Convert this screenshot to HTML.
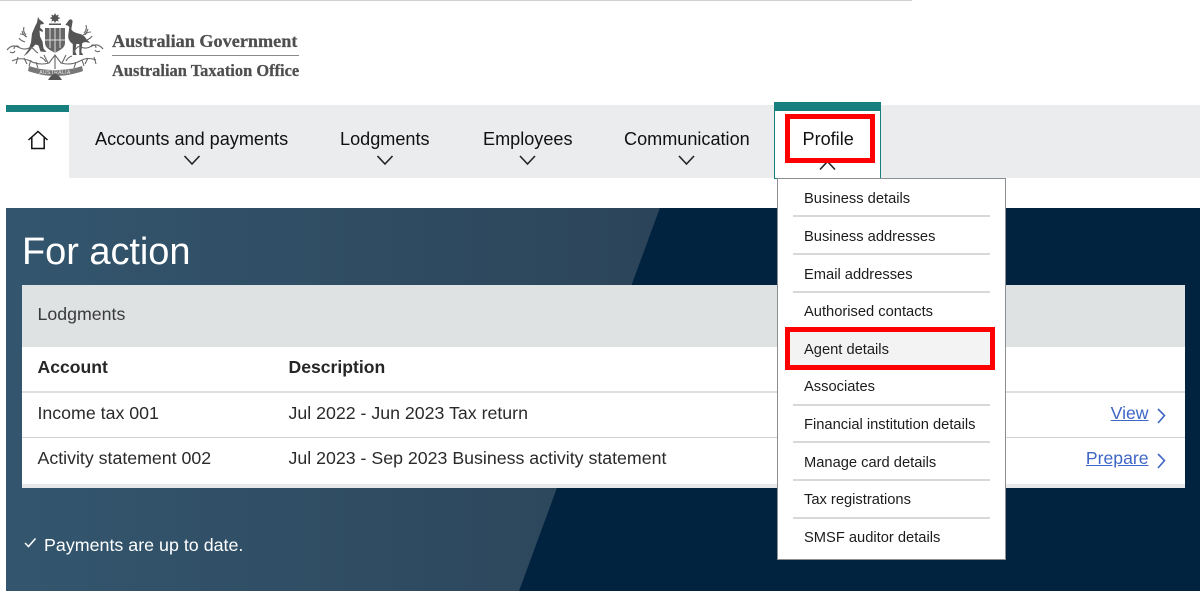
<!DOCTYPE html>
<html><head><meta charset="utf-8"><style>
html,body{margin:0;padding:0;background:#fff}
body{position:relative;width:1200px;height:594px;overflow:hidden;font-family:"Liberation Sans",Arial,sans-serif;color:#1a1a1a}
.a{position:absolute;white-space:nowrap}
.nav{font-size:18.100px;line-height:22px;top:128px;color:#111}
.th{font-size:17.600px;font-weight:bold;line-height:22px;color:#262626}
.td{font-size:17.750px;line-height:22px;color:#2a2a2a}
.m{left:804px;font-size:14.700px;line-height:18px;color:#1c1c1c}
.l{left:793px;width:197px;height:2px;background:#d6d8da}
.lnk{font-size:17.600px;line-height:22px;color:#3e66c4;text-decoration:underline}
</style></head><body>
<div class="a" style="left:0;top:0;width:912px;height:1px;background:#d0d0d0"></div>

<svg class="a" style="left:6px;top:11px;filter:blur(.25px)" width="100" height="72" viewBox="0 0 100 72">
<g fill="#555">
<path d="M49 2l1.200 2.500 2.500-1-.8 2.500 2.500 1-2.500 1.200.8 2.300-2.500-.8L49 12l-1.200-2.300-2.500.8.8-2.300-2.500-1.200 2.500-1-.8-2.500 2.500 1z"/>
<rect x="43" y="12.500" width="12" height="1.500"/>
<path d="M32 6l1.500 2.500L37 11l1 2-3.500.5-.5 3 3 3-.5 1.500-3-1.500.5 6 2.500 5 1 7 3 3.500-6-.5-2-6-3-1-3 3-5 6-4 3 5-7 2.500-7 1-9 3-7 2-4z"/>
<path d="M63 9c2-1.500 4 0 3.500 2l-1.200 7c1 3 5 4 9 5 3 1 5 3 6 5l4 4-5-1-3 1-1 9 2 3-4 0 0-11-3 0-1 8 1.500 3-4 0 0-11c-3-2-5-5-4.500-9l1-8-1.500-1.500-2.500-.5z"/>
</g>
<path d="M39 17h20v15c0 5-5 7-10 10-5-3-10-5-10-10z" fill="#666"/>
<path d="M49 17v25M39 29h20M44 17v20M54 17v20" fill="none" stroke="#ddd" stroke-width="1"/>
<g fill="none" stroke="#666" stroke-width="1.100">
<path d="M1 39c3-4 7-5 11-3s7 3 11 1 5 3 9 5M8 38c0-3 3-4 5-2M4 41c2 1 4 1 5-1"/>
<path d="M97 38c-3-4-7-5-11-3s-7 3-11 1-5 3-8 5M90 37c0-3-3-4-5-2M94 40c-2 1-4 1-5-1"/>
<path d="M6 50c6-3 12-3 18 0 6 3 12 4 19 2l6-8 6 8c7 2 13 1 19-2 5-3 11-3 16-1"/>
<path d="M12 46l-2 7M18 47l3 6M25 49l-2 6M30 51l2 6M38 44l4 8M60 44l-4 8M70 51l-2 6M76 49l2 6M82 47l-3 6M88 46l2 7"/>
<path d="M16 20c1 4 3 5 5 6M14 23c3 0 5 1 6 3M18 16c-1 3 0 6 2 8M19 31c-3-1-5-2-6-4M82 18c-1 4-3 5-5 6M85 21c-3 0-5 1-6 3M80 14c1 3 0 6-2 8M81 29c2-1 4-2 5-4"/>
<path d="M34 46c3 1 5 3 6 5M66 45c-3 1-5 3-6 5M49 44v14"/>
</g>
<path d="M23 55c9 3 17 4 26 4s19-1 27-4l1 5c-8 3-18 5-28 5s-18-2-27-5z" fill="#777"/>
<path d="M44 66l5-4 5 4 2 3H42z" fill="#555"/>
<text x="49" y="63" text-anchor="middle" font-size="5" font-family="Liberation Sans" fill="#eee" letter-spacing=".4">AUSTRALIA</text>
</svg>

<div class="a" style="left:112px;top:30px;font:bold 18.200px/22px 'Liberation Serif',serif;color:#4f4f4f;-webkit-text-stroke:.25px #4f4f4f">Australian Government</div>
<div class="a" style="left:112px;top:55px;width:187px;height:1px;background:#8a8a8a"></div>
<div class="a" style="left:112px;top:60px;font:bold 16.450px/21px 'Liberation Serif',serif;color:#4f4f4f;-webkit-text-stroke:.25px #4f4f4f">Australian Taxation Office</div>

<div class="a" style="left:6px;top:105px;width:1194px;height:73px;background:#eaecee"></div>
<div class="a" style="left:6px;top:105px;width:63px;height:73px;background:#fff"></div>
<div class="a" style="left:6px;top:105px;width:63px;height:7px;background:#17807f"></div>
<svg class="a" style="left:27px;top:130px" width="22" height="20" viewBox="0 0 22 20" fill="none" stroke="#111" stroke-width="1.500"><path d="M1.500 10L11 1.500 20.500 10M4.800 7.500V18.500H17.200V7.500"/></svg>

<div class="a nav" style="left:95px">Accounts and payments</div>
<div class="a nav" style="left:340px">Lodgments</div>
<div class="a nav" style="left:483px">Employees</div>
<div class="a nav" style="left:624px">Communication</div>
<svg class="a" style="left:0;top:150px" width="720" height="20" fill="none" stroke="#222" stroke-width="1.600"><path d="M184.500 6l7.500 8 7.500-8M377.500 6l7.500 8 7.500-8M520 6l7.500 8 7.500-8M679 6l7.500 8 7.500-8"/></svg>

<div class="a" style="left:6px;top:207.500px;width:1194px;height:383.500px;background:#02233f"></div>
<div class="a" style="left:6px;top:207.500px;width:654px;height:383.500px;background:linear-gradient(90deg,#33566e,#2c4459);clip-path:polygon(0 0,654px 0,513px 383.500px,0 383.500px)"></div>
<div class="a" style="left:22px;top:229px;font-size:38px;line-height:46px;color:#fff;letter-spacing:-.05px">For action</div>

<div class="a" style="left:22px;top:285px;width:1163px;height:203px;background:#fff"></div>
<div class="a" style="left:22px;top:285px;width:1163px;height:62px;background:#dfe2e3"></div>
<div class="a" style="left:22px;top:391px;width:1163px;height:2px;background:#dcdfe1"></div>
<div class="a" style="left:22px;top:437px;width:1163px;height:1px;background:#cfd3d6"></div>
<div class="a" style="left:22px;top:484px;width:1163px;height:4px;background:#e6e8ea"></div>
<div class="a td" style="left:37.500px;top:303px;color:#3a3a3a">Lodgments</div>
<div class="a th" style="left:37.500px;top:356px">Account</div>
<div class="a th" style="left:288.500px;top:356px">Description</div>
<div class="a td" style="left:37.500px;top:402px">Income tax 001</div>
<div class="a td" style="left:288.500px;top:402px">Jul 2022 - Jun 2023 Tax return</div>
<div class="a td" style="left:37.500px;top:447px">Activity statement 002</div>
<div class="a td" style="left:288.500px;top:447px">Jul 2023 - Sep 2023 Business activity statement</div>
<div class="a lnk" style="right:51.500px;top:402px">View</div>
<div class="a lnk" style="right:51.500px;top:447px">Prepare</div>
<svg class="a" style="left:1150px;top:400px" width="24" height="70" fill="none" stroke="#3e66c4" stroke-width="1.600"><path d="M8 9l6.500 6.500L8 23M8 54l6.500 6.500L8 68"/></svg>

<svg class="a" style="left:24px;top:537px" width="14" height="12" fill="none" stroke="#fff" stroke-width="1.500"><path d="M1 6l3.500 3.500L11.500 1.500"/></svg>
<div class="a" style="left:44px;top:534px;font-size:17.850px;line-height:22px;color:#fff">Payments are up to date.</div>

<div class="a" style="left:774px;top:102px;width:105px;height:76px;background:#fff;border:1px solid #17807f;border-top:0"></div>
<div class="a" style="left:774px;top:102px;width:107px;height:9px;background:#17807f"></div>
<div class="a nav" style="left:802.500px">Profile</div>
<svg class="a" style="left:815px;top:158px" width="24" height="14" fill="none" stroke="#222" stroke-width="1.600"><path d="M5 11.500L12.500 3.500 20 11.500"/></svg>
<div class="a" style="left:785px;top:114px;width:80px;height:39px;border:5px solid #f00"></div>

<div class="a" style="left:777px;top:178px;width:227px;height:380px;background:#fff;border:1px solid #8c8f91"></div>
<div class="a m" style="top:190px">Business details</div><div class="a l" style="top:215px"></div>
<div class="a m" style="top:228px">Business addresses</div><div class="a l" style="top:253px"></div>
<div class="a m" style="top:266px">Email addresses</div><div class="a l" style="top:291px"></div>
<div class="a m" style="top:303px">Authorised contacts</div>
<div class="a" style="left:785px;top:327px;width:200px;height:33px;background:#f3f3f3;border:5px solid #f00"></div>
<div class="a m" style="top:341px">Agent details</div>
<div class="a m" style="top:378px">Associates</div><div class="a l" style="top:404px"></div>
<div class="a m" style="top:416px">Financial institution details</div><div class="a l" style="top:441px"></div>
<div class="a m" style="top:454px">Manage card details</div><div class="a l" style="top:479px"></div>
<div class="a m" style="top:491px">Tax registrations</div><div class="a l" style="top:517px"></div>
<div class="a m" style="top:529px">SMSF auditor details</div>
</body></html>
